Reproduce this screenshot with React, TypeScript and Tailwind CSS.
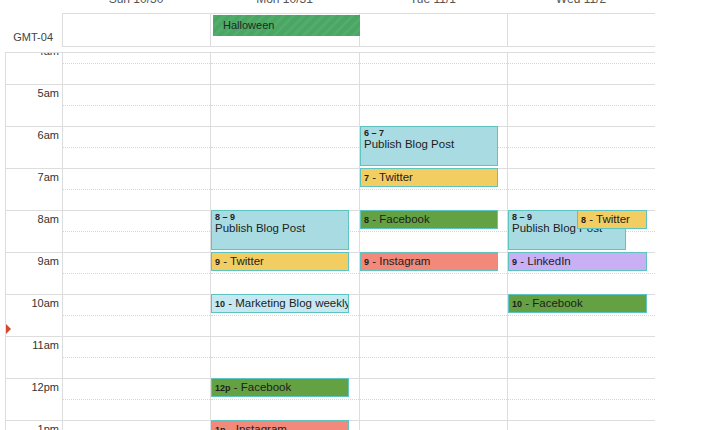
import React from 'react';

const DAYS = ['Sun 10/30', 'Mon 10/31', 'Tue 11/1', 'Wed 11/2'];
const HOURS = ['4am', '5am', '6am', '7am', '8am', '9am', '10am', '11am', '12pm', '1pm'];
const HOUR_PX = 42;
const FIRST_HOUR = 4;

type Ev = {
  start: number;
  end?: number;
  time: string;
  title: string;
  bg: string;
  left?: number;
  width: number;
};

const BLUE = 'bg-[#a9dbe3]';
const PALE = 'bg-[#c6e9f1]';
const YELLOW = 'bg-[#f1cd62]';
const GREEN = 'bg-[#64a142]';
const SALMON = 'bg-[#f2897a]';
const PURPLE = 'bg-[#c9aff3]';

const EVENTS: Ev[][] = [
  [],
  [
    { start: 8, end: 9, time: '8 – 9', title: 'Publish Blog Post', bg: BLUE, width: 138 },
    { start: 9, time: '9', title: 'Twitter', bg: YELLOW, width: 138 },
    { start: 10, time: '10', title: 'Marketing Blog weekly', bg: PALE, width: 138 },
    { start: 12, time: '12p', title: 'Facebook', bg: GREEN, width: 138 },
    { start: 13, time: '1p', title: 'Instagram', bg: SALMON, width: 138 },
  ],
  [
    { start: 6, end: 7, time: '6 – 7', title: 'Publish Blog Post', bg: BLUE, width: 138 },
    { start: 7, time: '7', title: 'Twitter', bg: YELLOW, width: 138 },
    { start: 8, time: '8', title: 'Facebook', bg: GREEN, width: 138 },
    { start: 9, time: '9', title: 'Instagram', bg: SALMON, width: 138 },
  ],
  [
    { start: 8, end: 9, time: '8 – 9', title: 'Publish Blog Post', bg: BLUE, width: 118 },
    { start: 8, time: '8', title: 'Twitter', bg: YELLOW, left: 69, width: 70 },
    { start: 9, time: '9', title: 'LinkedIn', bg: PURPLE, width: 139 },
    { start: 10, time: '10', title: 'Facebook', bg: GREEN, width: 139 },
  ],
];

const COLS = 'grid grid-cols-[57px_148px_149px_148px_148px]';

function EventBox({ ev }: { ev: Ev }) {
  const top = (ev.start - FIRST_HOUR) * HOUR_PX;
  const block = ev.end !== undefined;
  return (
    <div
      className={`absolute overflow-hidden whitespace-nowrap border border-[#5fc3c2] text-[#1d1d1d] px-[3px] ${ev.bg}`}
      style={{ top, left: ev.left ?? 0, width: ev.width, height: block ? 40 : 19 }}
    >
      {block ? (
        <div className="pt-[1px]">
          <div className="text-[9px] font-bold leading-[10px]">{ev.time}</div>
          <div className="text-[11.5px] leading-[13px]">{ev.title}</div>
        </div>
      ) : (
        <div className="text-[11.5px] leading-[16px]">
          <span className="text-[9px] font-bold">{ev.time}</span> - {ev.title}
        </div>
      )}
    </div>
  );
}

export default function App() {
  return (
    <div className="w-[708px] h-[430px] overflow-hidden bg-white font-['Liberation_Sans',Arial,sans-serif] text-[#333]">
      <div className="pl-[5px] w-[655px]">
        {/* Day headers */}
        <div className={`${COLS} h-[13px] overflow-hidden`}>
          <div />
          {DAYS.map((d) => (
            <div key={d} className="text-center text-[12px] leading-[12px] -mt-[7px] text-[#555]">
              {d}
            </div>
          ))}
        </div>

        {/* All-day row */}
        <div className={`${COLS} h-[34px]`}>
          <div className="flex items-end justify-end pr-[9px] pb-[3px] text-[11px] leading-[13px] text-[#444]">
            GMT-04
          </div>
          {DAYS.map((d, i) => (
            <div key={d} className="relative border-t border-b border-l border-[#ddd]">
              {i === 1 && (
                <div className="absolute top-[1px] left-[2px] w-[147px] h-[21px] bg-[#49a763] bg-[repeating-linear-gradient(135deg,rgba(255,255,255,0.06)_0_3px,transparent_3px_7px)] text-[11px] leading-[20px] text-[#1e2a22] pl-[10px] z-10">
                  Halloween
                </div>
              )}
            </div>
          ))}
        </div>

        {/* Time grid */}
        <div className="mt-[5px] h-[400px] overflow-hidden border-t border-[#ddd]">
          <div className={`${COLS} -mt-[11px]`}>
            <div className="relative border-l border-[#ddd]">
              {HOURS.map((h) => (
                <div key={h} className="h-[42px] border-t border-[#ddd] text-right pr-[3px] pt-[1px] text-[11px] leading-[14px] text-[#333]">
                  {h}
                </div>
              ))}
              <div className="absolute left-0 top-[282px] w-0 h-0 border-y-[5px] border-y-transparent border-l-[5px] border-l-[#d2492e]" />
            </div>
            {DAYS.map((d, i) => (
              <div key={d} className="relative border-l border-[#ddd]">
                {HOURS.map((h) => (
                  <div key={h} className="h-[42px] border-t border-[#ddd]">
                    <div className="h-[21px] border-b border-dotted border-[#d6d6d6]" />
                  </div>
                ))}
                {EVENTS[i].map((ev, k) => (
                  <EventBox key={k} ev={ev} />
                ))}
              </div>
            ))}
          </div>
        </div>
      </div>
    </div>
  );
}
